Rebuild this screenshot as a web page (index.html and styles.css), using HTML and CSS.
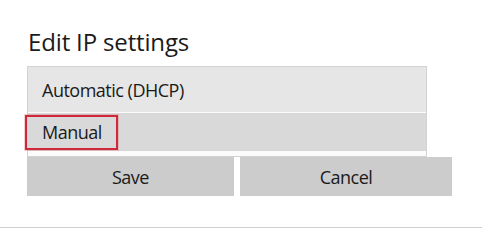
FILE: index.html
```html
<!DOCTYPE html>
<html>
<head>
<meta charset="utf-8">
<link rel="stylesheet" href="styles.css">
</head>
<body>
<div class="dialog">
  <h1 class="title">Edit IP settings</h1>
  <div class="dropdown">
    <div class="option option-auto">Automatic (DHCP)</div>
    <div class="option option-manual">Manual<span class="highlight"></span></div>
  </div>
  <div class="actions">
    <button class="btn btn-save">Save</button>
    <button class="btn btn-cancel">Cancel</button>
  </div>
</div>
<div class="footer"></div>
</body>
</html>
```
FILE: styles.css
```css
html, body {
  margin: 0;
  padding: 0;
  background: #ffffff;
}
body {
  width: 482px;
  height: 230px;
  overflow: hidden;
  font-family: "Open Sans", "Noto Sans", sans-serif;
  color: #1a1a1a;
}
.dialog {
  padding-left: 27px;
  padding-top: 26px;
}
.title {
  margin: 0 0 8px 1px;
  font-size: 24px;
  line-height: 32px;
  font-weight: 400;
  letter-spacing: -0.15px;
  color: #1a1a1a;
}
.dropdown {
  width: 400px;
  box-sizing: border-box;
  border: 1px solid #d2d2d2;
  background: #fbfbfb;
  padding-bottom: 5px;
}
.option {
  position: relative;
  display: flex;
  align-items: center;
  padding-left: 14px;
  font-size: 18px;
  letter-spacing: -0.5px;
}
.option-auto {
  height: 45px;
  background: #e6e6e6;
}
.option-manual {
  margin-top: 1px;
  height: 38px;
  background: #d9d9d9;
}
.highlight {
  position: absolute;
  left: -3px;
  top: 2px;
  width: 93px;
  height: 35px;
  box-sizing: border-box;
  border: 2px solid #cc2a3b;
  box-shadow: 0 0 0 1px rgba(230, 120, 130, 0.35);
}
.actions {
  display: flex;
  gap: 6px;
}
.btn {
  height: 39px;
  border: none;
  margin: 0;
  padding: 0;
  background: #cccccc;
  font-family: inherit;
  font-size: 18px;
  letter-spacing: -0.5px;
  color: #1a1a1a;
}
.btn-save {
  width: 207px;
}
.btn-cancel {
  width: 212px;
}
.footer {
  margin-top: 31px;
  border-top: 1px solid #cfcfcf;
}
```
